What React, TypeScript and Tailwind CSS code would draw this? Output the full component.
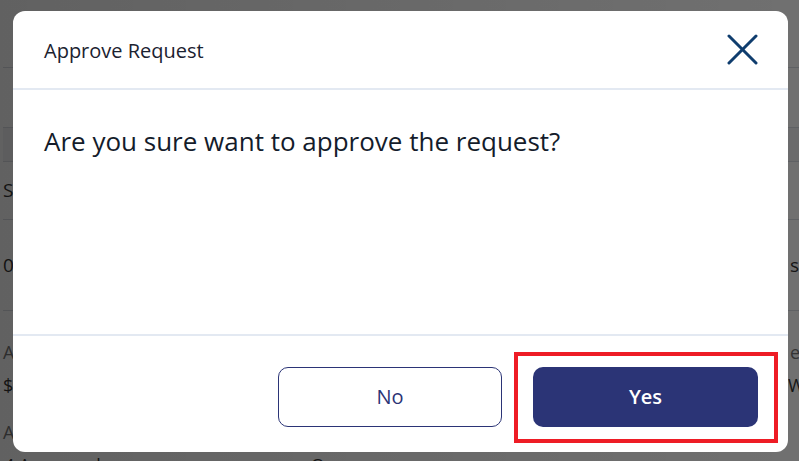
import { ReactNode } from 'react';

function BgRow({ left, right, className }: { left?: string; right?: string; className: string }) {
  return (
    <div className={`flex items-center justify-between border-b border-[#d9dde3] ${className}`}>
      <span className="whitespace-nowrap">{left}</span>
      <span className="w-[9px] overflow-hidden whitespace-nowrap">{right}</span>
    </div>
  );
}

function CloseIcon() {
  return (
    <svg width="31" height="31" viewBox="0 0 31 31" fill="none" stroke="#0f3d6e" strokeWidth="3" strokeLinecap="round">
      <path d="M2 2 L29 29" />
      <path d="M29 2 L2 29" />
    </svg>
  );
}

function Button({ children, primary }: { children: ReactNode; primary?: boolean }) {
  return (
    <button
      className={
        primary
          ? 'flex h-[60px] w-[225px] items-center justify-center rounded-[10px] bg-[#2b3476] text-[20px] font-semibold text-white'
          : 'flex h-[60px] w-[224px] items-center justify-center rounded-[10px] border border-[#2b3476] bg-white text-[20px] text-[#2b3476]'
      }
    >
      {children}
    </button>
  );
}

export default function App() {
  return (
    <div className="relative h-[461px] w-[799px] overflow-hidden bg-white font-['Open_Sans',sans-serif]">
      {/* page behind the dialog */}
      <div className="flex flex-col pl-[3px] text-[19px] text-[#333]">
        <BgRow className="h-[68px]" />
        <BgRow className="h-[60px]" />
        <BgRow className="h-[34px] bg-[#f3f4f6]" />
        <BgRow className="h-[58px]" left="Status" />
        <BgRow className="h-[91px]" left="0001" right="sent" />
        <div className="flex flex-col gap-[6px] pt-[28px] text-[18px]">
          <div className="flex justify-between text-[#777]">
            <span>Amount</span>
            <span className="w-[9px] overflow-hidden whitespace-nowrap">e</span>
          </div>
          <div className="flex justify-between">
            <span>$2,500</span>
            <span className="w-[11px] overflow-hidden whitespace-nowrap">W</span>
          </div>
          <div className="flex pt-[14px] text-[#777]">
            <span>Approver</span>
          </div>
          <div className="flex gap-[210px] pl-[1px]">
            <span>4 Approved</span>
            <span>O</span>
          </div>
        </div>
      </div>

      {/* overlay + dialog */}
      <div className="absolute inset-0 bg-gradient-to-r from-[rgba(0,0,0,0.62)] to-[rgba(0,0,0,0.56)] pl-[13px] pt-[11px]">
        <div className="flex h-[441px] w-[775px] flex-col rounded-[12px] bg-white">
          <div className="flex h-[79px] items-center justify-between border-b-2 border-[#e3e9f2] pl-[31px] pr-[30px]">
            <h2 className="pt-[2px] text-[20px] text-[#1b2230]">Approve Request</h2>
            <CloseIcon />
          </div>
          <div className="flex-1 px-[31px] pt-[34px]">
            <p className="text-[26px] leading-[34px] text-[#141c2b]">Are you sure want to approve the request?</p>
          </div>
          <div className="flex justify-end gap-[31px] border-t-2 border-[#e3e9f2] pb-[25px] pr-[30px] pt-[31px]">
            <Button>No</Button>
            <Button primary>Yes</Button>
          </div>
        </div>
      </div>

      {/* highlight annotation */}
      <div className="absolute left-[514px] top-[352px] h-[91px] w-[264px] border-4 border-[#ee1c25]" />
    </div>
  );
}
